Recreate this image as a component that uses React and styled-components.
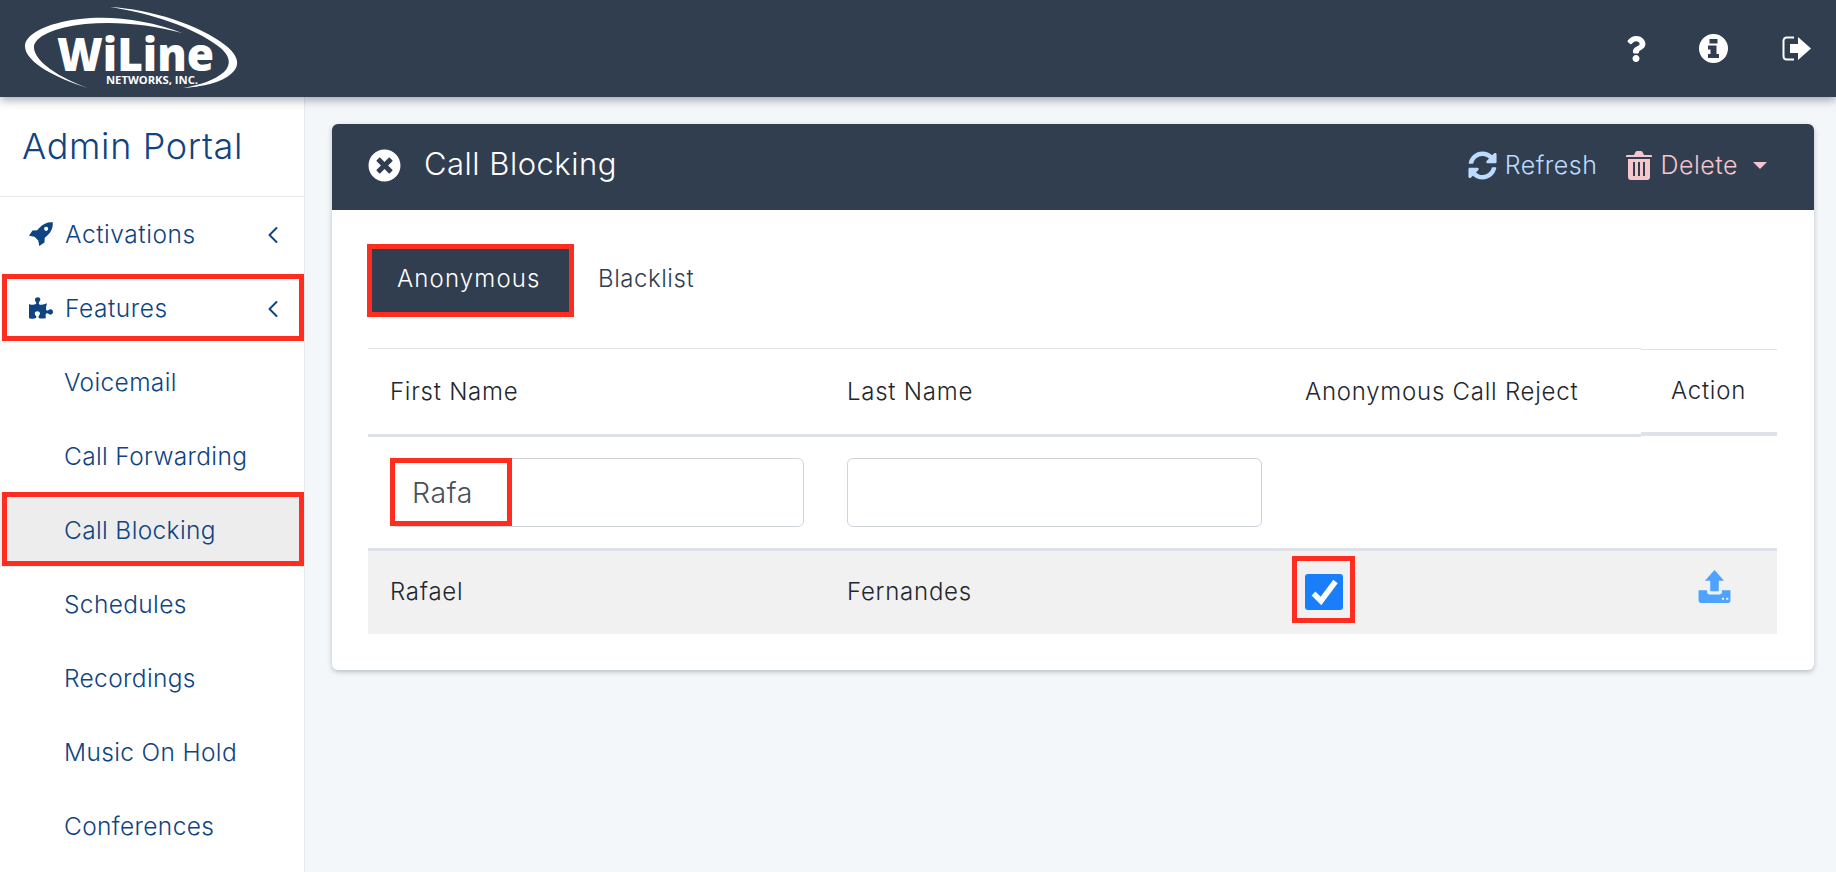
import React from "react";
import styled, { createGlobalStyle } from "styled-components";
import { FaPuzzlePiece, FaQuestion, FaTimesCircle, FaSyncAlt } from "react-icons/fa";
import { ChevronLeft } from "lucide-react";

const GlobalStyle = createGlobalStyle`
  html, body { margin: 0; padding: 0; height: 100%; }
  body {
    font-family: "Inter", "Liberation Sans", sans-serif;
    background: #f4f7fa;
  }
  * { box-sizing: border-box; }
`;

const Page = styled.div`
  height: 872px;
  display: flex;
  flex-direction: column;
  overflow: hidden;
`;

const TopBar = styled.header`
  height: 97px;
  flex: none;
  background: #303e50;
  display: flex;
  align-items: center;
  justify-content: space-between;
  box-shadow: 0 3px 9px rgba(50, 63, 80, 0.45);
  position: relative;
  z-index: 2;
`;

const Logo = styled.svg`
  width: 260px;
  height: 97px;
  display: block;
`;

const TopIcons = styled.div`
  display: flex;
  align-items: center;
  color: #fff;
  padding-right: 25px;
`;

const TopIcon = styled.span`
  display: flex;
  justify-content: center;
  width: ${(p) => p.$w}px;
  margin-left: ${(p) => p.$gap}px;
  font-size: ${(p) => p.$size}px;
`;

const Body = styled.div`
  flex: 1;
  display: flex;
  min-height: 0;
`;

const Sidebar = styled.aside`
  width: 305px;
  flex: none;
  background: #fff;
  border-right: 1px solid #e6e9ed;
  color: #0f4482;
`;

const Brand = styled.div`
  height: 100px;
  padding: 27px 0 0 22px;
  font-size: 36px;
  line-height: 44px;
  font-weight: 300;
  letter-spacing: 0.65px;
  border-bottom: 1px solid #e6e9ed;
`;

const NavItem = styled.div`
  position: relative;
  height: 74px;
  display: flex;
  align-items: center;
  padding-left: ${(p) => (p.$sub ? 64 : 29)}px;
  padding-bottom: 1px;
  font-size: 24.5px;
  font-weight: 300;
  letter-spacing: ${(p) => (p.$sub ? 0.35 : 0.55)}px;
  background: ${(p) => (p.$active ? "#ededed" : "transparent")};
`;

const NavIcon = styled.span`
  width: 36px;
  display: flex;
  font-size: 24px;
`;

const NavArrow = styled.span`
  position: absolute;
  right: 17px;
  top: 24px;
  display: flex;
`;

const Main = styled.main`
  flex: 1;
  padding: 27px 23px 0 27px;
`;

const Card = styled.section`
  background: #fff;
  border-radius: 6px;
  box-shadow: 0 2px 5px rgba(50, 63, 80, 0.3);
  overflow: hidden;
`;

const CardHead = styled.div`
  height: 86px;
  background: #303e50;
  display: flex;
  align-items: center;
  padding: 0 47px 4px 36px;
  color: #fff;
`;

const CardTitle = styled.h2`
  margin: 0 0 4px 23px;
  font-size: 31px;
  font-weight: 300;
  letter-spacing: 0.5px;
  flex: 1;
`;

const HeadAction = styled.span`
  display: flex;
  align-items: center;
  gap: 8px;
  margin-left: 29px;
  font-size: 25px;
  font-weight: 300;
  letter-spacing: 0.5px;
  color: ${(p) => p.$color};
`;

const Caret = styled.span`
  width: 0;
  height: 0;
  margin-left: 7px;
  border-left: 7px solid transparent;
  border-right: 7px solid transparent;
  border-top: 7px solid currentColor;
`;

const CardBody = styled.div`
  padding: 39px 37px 36px 36px;
`;

const Tabs = styled.div`
  display: flex;
  align-items: center;
  padding-left: 4px;
  height: 63px;
  margin-bottom: 36px;
`;

const Tab = styled.div`
  position: relative;
  height: 63px;
  width: ${(p) => (p.$active ? "197px" : "auto")};
  display: flex;
  align-items: center;
  padding: 0 29px 4px ${(p) => (p.$active ? 25 : 29)}px;
  font-size: 24px;
  font-weight: 300;
  letter-spacing: ${(p) => (p.$active ? 1.15 : 0.55)}px;
  background: ${(p) => (p.$active ? "#303e50" : "transparent")};
  color: ${(p) => (p.$active ? "#fff" : "#303e50")};
`;

const Row = styled.div`
  display: grid;
  grid-template-columns: 457px 458px 358px 136px;
  background: ${(p) => (p.$shade ? "#f1f1f1" : "transparent")};
  border-bottom: ${(p) => (p.$line ? "3px solid #dee2e6" : "none")};
  color: #23272d;
`;

const HeadCell = styled.div`
  height: ${(p) => (p.$side ? 87 : 89)}px;
  margin-top: ${(p) => (p.$side ? 1 : 0)}px;
  border-top: 1px solid #dee2e6;
  border-bottom: ${(p) => (p.$side ? 4 : 3)}px solid #dee2e6;
  display: flex;
  align-items: center;
  padding-left: ${(p) => (p.$side ? 30 : 22)}px;
  padding-bottom: 1px;
  font-size: 24px;
  font-weight: 300;
  letter-spacing: 0.75px;
`;

const FilterCell = styled.div`
  height: 111px;
  padding: 21px 21px 0 22px;
`;

const FilterField = styled.div`
  position: relative;
  height: 69px;
  border: 1px solid #ced4da;
  border-radius: 6px;
  background: #fff;
  display: flex;
  align-items: center;
  padding: 0 0 1px 21px;
  font-size: 28.5px;
  font-weight: 300;
  letter-spacing: 0.6px;
  color: #495057;
`;

const DataCell = styled.div`
  position: relative;
  height: 83px;
  display: flex;
  align-items: center;
  padding-left: ${(p) => p.$pad || 22}px;
  padding-bottom: 3px;
  font-size: 24px;
  font-weight: 300;
  letter-spacing: 0.75px;
`;

const CheckBox = styled.span`
  position: relative;
  width: 38px;
  height: 36px;
  margin-top: 1px;
  border-radius: 3px;
  background: #1a7efb;
  display: flex;
  align-items: center;
  justify-content: center;
`;

const UploadWrap = styled.span`
  display: flex;
  margin-bottom: 9px;
`;

// red annotation boxes sitting over the screenshot
const Mark = styled.span`
  position: absolute;
  top: ${(p) => p.$t}px;
  right: ${(p) => p.$r}px;
  bottom: ${(p) => p.$b}px;
  left: ${(p) => p.$l}px;
  border: 5px solid #ff2d1f;
  pointer-events: none;
`;

const WiLineLogo = () => (
  <Logo viewBox="0 0 260 97">
    <path
      fill="#fff"
      d="M182 33 C150 20 110 15 80 19 C45 23 24 35 25 47 C26 62 55 78 88 88 C60 78 35 62 34 48 C33 37 55 27 85 24 C115 21 150 24 182 33 Z"
    />
    <path
      fill="#fff"
      d="M110 7 C150 9 200 25 225 45 C238 55 241 65 232 73 C222 83 200 87 183 88 C200 85 215 80 224 72 C232 64 230 55 218 46 C195 28 150 13 110 7 Z"
    />
    <text x="57" y="71" fill="#fff" fontFamily="Open Sans" fontWeight="800" fontSize="46" textLength="157" lengthAdjust="spacingAndGlyphs">
      WiLine
    </text>
    <text x="106" y="84" fill="#fff" fontFamily="Open Sans" fontWeight="700" fontSize="10" textLength="92" lengthAdjust="spacingAndGlyphs">
      NETWORKS, INC.
    </text>
  </Logo>
);

const InfoIcon = () => (
  <svg width="29" height="29" viewBox="0 0 29 29">
    <path
      fill="#fff"
      fillRule="evenodd"
      d="M14.5 0 A14.5 14.5 0 1 0 14.5 29 A14.5 14.5 0 1 0 14.5 0 Z M10.5 5 H18.5 V9.5 H10.5 Z M9 11.5 H17.5 V20 H20 V24 H9 V20 H11.5 V15.5 H9 Z"
    />
  </svg>
);

const SignOutIcon = () => (
  <svg width="29" height="25" viewBox="0 0 29 25">
    <path fill="none" stroke="#fff" strokeWidth="2" d="M12 1.5 H5 Q1.5 1.5 1.5 5 V20 Q1.5 23.5 5 23.5 H12" />
    <path fill="#fff" d="M8 8 H16 V1 L29 12.5 L16 24 V17 H8 Z" />
  </svg>
);

const RocketIcon = () => (
  <svg width="24" height="24" viewBox="0 0 70 70">
    <path
      fill="currentColor"
      fillRule="evenodd"
      d="M69 1 C71 13 66 28 52 41 L46 46 L45 60 L30 70 L27 54 L16 43 L0 40 L10 25 L24 24 L29 18 C42 4 57 -1 69 1 Z M50 14 A6 6 0 1 0 50 26 A6 6 0 1 0 50 14 Z"
    />
  </svg>
);

const TrashIcon = () => (
  <svg width="26" height="29" viewBox="0 0 26 29">
    <path
      fill="#f5c6cb"
      fillRule="evenodd"
      d="M8 4 L9.5 1 Q10 0 11 0 H15 Q16 0 16.5 1 L18 4 H25 Q26 4 26 5 V6 H0 V5 Q0 4 1 4 Z M2 8 H24 V26 Q24 29 21 29 H5 Q2 29 2 26 Z M7 11 V25 H9 V11 Z M12 11 V25 H14 V11 Z M17 11 V25 H19 V11 Z"
    />
  </svg>
);

const UploadIcon = () => (
  <svg width="33" height="33" viewBox="0 0 30 31">
    <path fill="#4da3ff" d="M15 0 L24 10 H19 V20 H11 V10 H6 Z" />
    <path
      fill="#4da3ff"
      fillRule="evenodd"
      d="M0 19 H8 V21 Q8 23 10 23 H20 Q22 23 22 21 V19 H30 V29 Q30 31 28 31 H2 Q0 31 0 29 Z M22 26 V28 H24 V26 Z M26 26 V28 H28 V26 Z"
    />
  </svg>
);

const CheckIcon = () => (
  <svg width="27" height="26" viewBox="0 0 27 26">
    <polyline points="2.5,14.5 10,22 24.5,2.5" fill="none" stroke="#fff" strokeWidth="5.5" />
  </svg>
);

const subItems = ["Voicemail", "Call Forwarding", "Call Blocking", "Schedules", "Recordings", "Music On Hold", "Conferences"];

const App = () => {
  return (
    <Page>
      <GlobalStyle />
      <TopBar>
        <WiLineLogo />
        <TopIcons>
          <TopIcon $w={20} $gap={0} $size={26}>
            <FaQuestion />
          </TopIcon>
          <TopIcon $w={30} $gap={52} $size={29}>
            <InfoIcon />
          </TopIcon>
          <TopIcon $w={29} $gap={54} $size={29}>
            <SignOutIcon />
          </TopIcon>
        </TopIcons>
      </TopBar>
      <Body>
        <Sidebar>
          <Brand>Admin Portal</Brand>
          <NavItem>
            <NavIcon>
              <RocketIcon />
            </NavIcon>
            Activations
            <NavArrow>
              <ChevronLeft size={28} strokeWidth={1.7} />
            </NavArrow>
          </NavItem>
          <NavItem>
            <NavIcon>
              <FaPuzzlePiece />
            </NavIcon>
            Features
            <NavArrow>
              <ChevronLeft size={28} strokeWidth={1.7} />
            </NavArrow>
            <Mark $t={3} $r={0} $b={4} $l={2} />
          </NavItem>
          {subItems.map((name) => (
            <NavItem key={name} $sub $active={name === "Call Blocking"}>
              {name}
              {name === "Call Blocking" && <Mark $t={-1} $r={0} $b={1} $l={2} />}
            </NavItem>
          ))}
        </Sidebar>
        <Main>
          <Card>
            <CardHead>
              <FaTimesCircle size={33} />
              <CardTitle>Call Blocking</CardTitle>
              <HeadAction $color="#bcdcff">
                <FaSyncAlt size={29} />
                Refresh
              </HeadAction>
              <HeadAction $color="#f5c6cb">
                <TrashIcon />
                Delete
                <Caret />
              </HeadAction>
            </CardHead>
            <CardBody>
              <Tabs>
                <Tab $active>
                  Anonymous
                  <Mark $t={-5} $r={-5} $b={-5} $l={-5} />
                </Tab>
                <Tab>Blacklist</Tab>
              </Tabs>
              <Row>
                <HeadCell>First Name</HeadCell>
                <HeadCell>Last Name</HeadCell>
                <HeadCell>Anonymous Call Reject</HeadCell>
                <HeadCell $side>Action</HeadCell>
              </Row>
              <Row $line>
                <FilterCell>
                  <FilterField>
                    Rafa
                    <Mark $t={-1} $b={0} $l={-1} $r={291} />
                  </FilterField>
                </FilterCell>
                <FilterCell>
                  <FilterField />
                </FilterCell>
              </Row>
              <Row $shade>
                <DataCell>Rafael</DataCell>
                <DataCell>Fernandes</DataCell>
                <DataCell>
                  <CheckBox>
                    <CheckIcon />
                    <Mark $t={-18} $r={-12} $b={-13} $l={-13} />
                  </CheckBox>
                </DataCell>
                <DataCell $pad={57}>
                  <UploadWrap>
                    <UploadIcon />
                  </UploadWrap>
                </DataCell>
              </Row>
            </CardBody>
          </Card>
        </Main>
      </Body>
    </Page>
  );
};

export default App;
